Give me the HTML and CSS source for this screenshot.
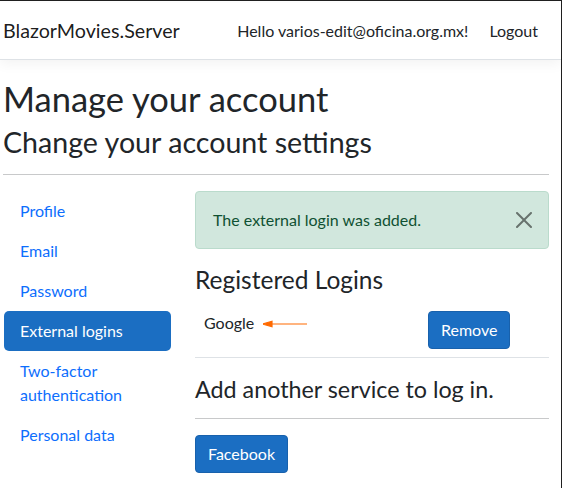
FILE: index.html
```html
<!DOCTYPE html>
<html lang="en">
<head>
<meta charset="utf-8">
<title>Manage your account - BlazorMovies.Server</title>
<link rel="stylesheet" href="styles.css">
</head>
<body>
<header class="navbar">
  <div class="nav-container">
    <a class="brand" href="#">BlazorMovies.Server</a>
    <ul class="nav-right">
      <li><a class="nav-link" href="#">Hello varios-edit@oficina.org.mx!</a></li>
      <li><button class="nav-btn" type="button">Logout</button></li>
    </ul>
  </div>
</header>
<main class="page">
  <h1 class="title">Manage your account</h1>
  <h2 class="subtitle">Change your account settings</h2>
  <hr class="rule rule-top">
  <div class="layout">
    <ul class="side-nav">
      <li><a class="pill" href="#">Profile</a></li>
      <li><a class="pill" href="#">Email</a></li>
      <li><a class="pill" href="#">Password</a></li>
      <li><a class="pill active" href="#">External logins</a></li>
      <li><a class="pill" href="#">Two-factor authentication</a></li>
      <li><a class="pill" href="#">Personal data</a></li>
    </ul>
    <section class="content">
      <div class="alert">
        The external login was added.
        <button class="close" type="button" aria-label="Close">
          <svg viewBox="0 0 16 16" width="16" height="16"><path d="M.293.293a1 1 0 0 1 1.414 0L8 6.586 14.293.293a1 1 0 1 1 1.414 1.414L9.414 8l6.293 6.293a1 1 0 0 1-1.414 1.414L8 9.414l-6.293 6.293a1 1 0 0 1-1.414-1.414L6.586 8 .293 1.707a1 1 0 0 1 0-1.414z"/></svg>
        </button>
      </div>
      <h4 class="section-title">Registered Logins</h4>
      <div class="logins">
        <div class="login-row">
          <div class="cell provider">Google
            <svg class="arrow" viewBox="0 0 45 8" width="45" height="8"><line x1="6" y1="4" x2="44" y2="4"/><polygon points="0,4 9,1.3 9,6.7"/></svg>
          </div>
          <div class="cell"><button class="btn" type="button">Remove</button></div>
        </div>
      </div>
      <h4 class="section-title add-title">Add another service to log in.</h4>
      <hr class="rule rule-add">
      <button class="btn" type="button">Facebook</button>
    </section>
  </div>
</main>
</body>
</html>
```

FILE: styles.css
```css
* { box-sizing: border-box; }

html { background: #fff; }

body {
  margin: 0;
  min-height: 100vh;
  padding-top: 2px;
  border-top: 1px solid #1f1f1f;
  border-right: 1px solid #1f1f1f;
  background: #fff;
  color: #212529;
  font-family: Lato, "Open Sans", sans-serif;
  font-size: 16px;
  line-height: 24px;
}

/* navbar */
.navbar {
  position: relative;
  height: 57px;
  border-bottom: 1px solid #dee2e6;
  box-shadow: 0 4px 12px rgba(0, 0, 0, .05);
  background: #fff;
}

.nav-container {
  height: 100%;
  display: flex;
  align-items: center;
  justify-content: space-between;
  padding: 0 10px 0 3px;
}

.brand {
  font-size: 19.7px;
  line-height: 30px;
  color: rgba(0, 0, 0, .9);
  text-decoration: none;
}

.nav-right {
  display: flex;
  align-items: center;
  list-style: none;
  margin: 0;
  padding: 0;
}

.nav-link {
  display: block;
  padding: 8px;
  color: #212529;
  text-decoration: none;
}

.nav-btn {
  padding: 6px 12px;
  border: 1px solid transparent;
  background: none;
  color: #212529;
  font: inherit;
  line-height: 24px;
}

/* page */
.page {
  padding: 16px 12px 0 3px;
}

.title {
  margin: 0 0 2px;
  font-size: 34.5px;
  line-height: 46px;
  font-weight: 400;
}

.subtitle {
  margin: 0;
  font-size: 28.6px;
  line-height: 36px;
  font-weight: 400;
}

.rule {
  margin: 0;
  border: 0;
  border-top: 1px solid #c8c9ca;
}

.rule-top { margin: 14px 0 16px; }
.rule-add { margin: 14px 0 16px; }

.layout {
  display: grid;
  grid-template-columns: 167px 1fr;
  column-gap: 24px;
  padding-left: 1px;
}

.side-nav {
  list-style: none;
  margin: 0;
  padding: 0;
}

.pill {
  display: block;
  padding: 8px 16px;
  border-radius: 5px;
  color: #0d6efd;
  text-decoration: none;
}

.pill.active {
  background: #1b6ec2;
  color: #fff;
}

/* alert */
.alert {
  position: relative;
  margin-bottom: 16px;
  padding: 16px 48px 16px 17px;
  border: 1px solid #badbcc;
  border-radius: 4px;
  background: #d1e7dd;
  color: #0f5132;
}

.close {
  position: absolute;
  top: 0;
  right: 0;
  padding: 20px 16px;
  border: 0;
  background: none;
  opacity: .5;
  line-height: 0;
}

.close svg { display: block; fill: #000; }

.section-title {
  margin: 0 0 8px;
  font-size: 24.5px;
  line-height: 30px;
  font-weight: 400;
}

.add-title { margin: 0; font-size: 23.3px; }

/* logins table */
.logins { margin-bottom: 16px; }

.login-row {
  display: grid;
  grid-template-columns: 224px 1fr;
  border-bottom: 1px solid #dee2e6;
}

.cell { padding: 8px 8px 8px 9px; }

.provider { position: relative; }

.arrow {
  position: absolute;
  left: 68px;
  top: 17px;
  fill: #ff6a00;
  stroke: #ff6a00;
  stroke-width: 1.2;
}

.btn {
  display: inline-block;
  padding: 6px 12px;
  border: 1px solid #1861ac;
  border-radius: 4px;
  background: #1b6ec2;
  color: #fff;
  font: inherit;
  line-height: 24px;
}
```
